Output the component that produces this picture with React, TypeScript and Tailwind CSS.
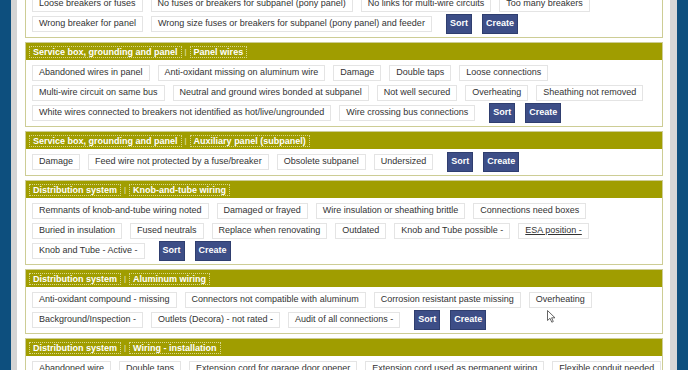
import React from "react";

type Tag = { label: string; underline?: boolean };
type Section = {
  group: string;
  topic: string;
  rows: (string | Tag)[][];
  buttonsOnRow: number; // index of row holding Sort/Create, -1 = below the fold
};

const sections: Section[] = [
  {
    group: "Service box, grounding and panel",
    topic: "Breakers and fuses",
    rows: [
      ["Loose breakers or fuses", "No fuses or breakers for subpanel (pony panel)", "No links for multi-wire circuits", "Too many breakers"],
      ["Wrong breaker for panel", "Wrong size fuses or breakers for subpanel (pony panel) and feeder"],
    ],
    buttonsOnRow: 1,
  },
  {
    group: "Service box, grounding and panel",
    topic: "Panel wires",
    rows: [
      ["Abandoned wires in panel", "Anti-oxidant missing on aluminum wire", "Damage", "Double taps", "Loose connections"],
      ["Multi-wire circuit on same bus", "Neutral and ground wires bonded at subpanel", "Not well secured", "Overheating", "Sheathing not removed"],
      ["White wires connected to breakers not identified as hot/live/ungrounded", "Wire crossing bus connections"],
    ],
    buttonsOnRow: 2,
  },
  {
    group: "Service box, grounding and panel",
    topic: "Auxiliary panel (subpanel)",
    rows: [["Damage", "Feed wire not protected by a fuse/breaker", "Obsolete subpanel", "Undersized"]],
    buttonsOnRow: 0,
  },
  {
    group: "Distribution system",
    topic: "Knob-and-tube wiring",
    rows: [
      ["Remnants of knob-and-tube wiring noted", "Damaged or frayed", "Wire insulation or sheathing brittle", "Connections need boxes"],
      ["Buried in insulation", "Fused neutrals", "Replace when renovating", "Outdated", "Knob and Tube possible -", { label: "ESA position -", underline: true }],
      ["Knob and Tube - Active -"],
    ],
    buttonsOnRow: 2,
  },
  {
    group: "Distribution system",
    topic: "Aluminum wiring",
    rows: [
      ["Anti-oxidant compound - missing", "Connectors not compatible with aluminum", "Corrosion resistant paste missing", "Overheating"],
      ["Background/Inspection -", "Outlets (Decora) - not rated -", "Audit of all connections -"],
    ],
    buttonsOnRow: 1,
  },
  {
    group: "Distribution system",
    topic: "Wiring - installation",
    rows: [
      ["Abandoned wire", "Double taps", "Extension cord for garage door opener", "Extension cord used as permanent wiring", "Flexible conduit needed"],
    ],
    buttonsOnRow: -1,
  },
];

function Chip({ tag }: { tag: string | Tag }) {
  const t = typeof tag === "string" ? { label: tag } : tag;
  return (
    <span
      className={
        "h-[16px] shrink-0 flex items-center px-[6px] border border-[#e4e4e4] bg-white text-[9px] text-[#333] whitespace-nowrap" +
        (t.underline ? " underline" : "")
      }
    >
      {t.label}
    </span>
  );
}

function Card({ s }: { s: Section }) {
  return (
    <div className="border border-[#cdcd95] bg-white overflow-hidden">
      {/* header */}
      <div className="h-[17px] bg-[#a09d00] flex items-center px-[3px]">
        <span className="border border-dotted border-[#d9d78f] px-[3px] leading-[10px] text-[9px] font-bold text-white">
          {s.group}
        </span>
        <span className="mx-[3px] text-[8px] text-[#ecebc4] leading-[10px]">|</span>
        <span className="border border-dotted border-[#d9d78f] px-[3px] leading-[10px] text-[9px] font-bold text-white">
          {s.topic}
        </span>
      </div>
      {/* tags */}
      <div className="px-[6px] py-[3px]">
        {s.rows.map((row, i) => (
          <div key={i} className="flex items-center gap-2 h-[20px]">
            {row.map((t, j) => (
              <Chip key={j} tag={t} />
            ))}
            {i === s.buttonsOnRow && (
              <>
                <button className="ml-[6px] h-[20px] px-[3px] bg-[#3d4e87] border border-[#2f3e6f] text-white font-bold text-[9px]">
                  Sort
                </button>
                <button className="ml-[2px] h-[20px] px-[3px] bg-[#3d4e87] border border-[#2f3e6f] text-white font-bold text-[9px]">
                  Create
                </button>
              </>
            )}
          </div>
        ))}
      </div>
    </div>
  );
}

export default function App() {
  return (
    <div className="relative w-[688px] h-[370px] overflow-hidden flex bg-[#0d4f7e] font-['Liberation_Sans',Arial,sans-serif]">
      <div className="w-[11px] shrink-0" />
      <div className="w-[6px] shrink-0 bg-[#d4d4d4]" />
      <div className="flex-1 min-w-0 overflow-hidden bg-white pl-[8px] pr-[7px]">
        <div className="-mt-[27px] flex flex-col gap-1">
          {sections.map((s, i) => (
            <Card key={i} s={s} />
          ))}
        </div>
      </div>
      <div className="w-[7px] shrink-0 bg-[#d6d6d6]" />
      <div className="w-[11px] shrink-0" />

      {/* mouse pointer */}
      <svg className="absolute left-[547px] top-[310px]" width="9" height="13" viewBox="0 0 9 13">
        <path d="M0.5 0.5 L0.5 10.5 L3 8.3 L4.8 12.2 L6.3 11.5 L4.6 7.8 L8 7.8 Z" fill="#fff" stroke="#555" strokeWidth="0.9" strokeLinejoin="round" />
      </svg>
    </div>
  );
}
